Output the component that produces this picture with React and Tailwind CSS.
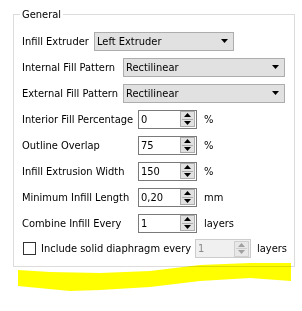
import React from 'react';

const font = { fontFamily: '"DejaVu Sans Condensed", "DejaVu Sans", Tahoma, sans-serif' };

function Combo({ value, width }) {
  return (
    <div className={`flex items-center justify-between h-[19px] border border-[#adadad] bg-[#e1e1e1] pl-[2px] pr-[5px] ${width}`}>
      <span>{value}</span>
      <svg width="7" height="4" viewBox="0 0 7 4"><path d="M0 0h7L3.5 4z" fill="#000" /></svg>
    </div>
  );
}

function SpinButtons({ disabled }) {
  const c = disabled ? '#a0a0a0' : '#000';
  return (
    <div className={`flex flex-col w-[15px] h-[16px] border ${disabled ? 'border-[#cfcfcf] bg-[#e8e8e8]' : 'border-[#adadad] bg-[#e1e1e1]'}`}>
      <div className="flex-1 flex items-center justify-center">
        <svg width="7" height="4" viewBox="0 0 7 4"><path d="M3.5 0L7 4H0z" fill={c} /></svg>
      </div>
      <div className={`h-px mx-[1px] ${disabled ? 'bg-[#cfcfcf]' : 'bg-[#adadad]'}`} />
      <div className="flex-1 flex items-center justify-center">
        <svg width="7" height="4" viewBox="0 0 7 4"><path d="M0 0h7L3.5 4z" fill={c} /></svg>
      </div>
    </div>
  );
}

function Spin({ value, width = 'w-[59px]', disabled }) {
  return (
    <div className={`flex items-center justify-between h-[19px] border pl-[2px] pr-[1px] ${width} ${disabled ? 'border-[#cccccc] bg-[#f0f0f0] text-[#8a8a8a]' : 'border-[#7a7a7a] bg-white'}`}>
      <span>{value}</span>
      <SpinButtons disabled={disabled} />
    </div>
  );
}

function SpinRow({ label, value, unit }) {
  return (
    <div className="flex items-center h-[26px]">
      <span className="w-[116px]">{label}</span>
      <Spin value={value} />
      <span className="ml-[7px]">{unit}</span>
    </div>
  );
}

export default function App() {
  return (
    <div className="relative w-[302px] h-[311px] pt-[8px] bg-white text-[11px] leading-[13px] text-black" style={font}>
      <fieldset className="ml-[13px] w-[282px] h-[259px] border border-[#dcdcdc] px-[6px]">
        <legend className="px-[2px]">General</legend>
        <div className="pl-[2px] pt-[7px]">
          <div className="flex items-center h-[26px]">
            <span className="w-[72px]">Infill Extruder</span>
            <Combo value="Left Extruder" width="w-[140px]" />
          </div>
          <div className="flex items-center h-[26px]">
            <span className="w-[101px]">Internal Fill Pattern</span>
            <Combo value="Rectilinear" width="w-[162px]" />
          </div>
          <div className="flex items-center h-[26px]">
            <span className="w-[101px]">External Fill Pattern</span>
            <Combo value="Rectilinear" width="w-[162px]" />
          </div>
          <SpinRow label="Interior Fill Percentage" value="0" unit="%" />
          <SpinRow label="Outline Overlap" value="75" unit="%" />
          <SpinRow label="Infill Extrusion Width" value="150" unit="%" />
          <SpinRow label="Minimum Infill Length" value="0,20" unit="mm" />
          <SpinRow label="Combine Infill Every" value="1" unit="layers" />
          <div className="flex items-center h-[25px]">
            <div className="ml-[1px] w-[13px] h-[13px] border border-[#333333] bg-white" />
            <span className="ml-[5px] w-[154px] whitespace-nowrap">Include solid diaphragm every</span>
            <Spin value="1" width="w-[56px]" disabled />
            <span className="ml-[6px]">layers</span>
          </div>
        </div>
      </fieldset>
      <svg className="absolute left-0 top-0 mix-blend-multiply pointer-events-none" width="302" height="311">
        <path
          d="M18 270 L50 272 L100 273 L150 271 L200 265 L250 263 L291 263 L291 281 L250 278 L200 281 L150 287 L100 290 L70 291 L18 286 Z"
          fill="#ffff00"
        />
      </svg>
    </div>
  );
}
